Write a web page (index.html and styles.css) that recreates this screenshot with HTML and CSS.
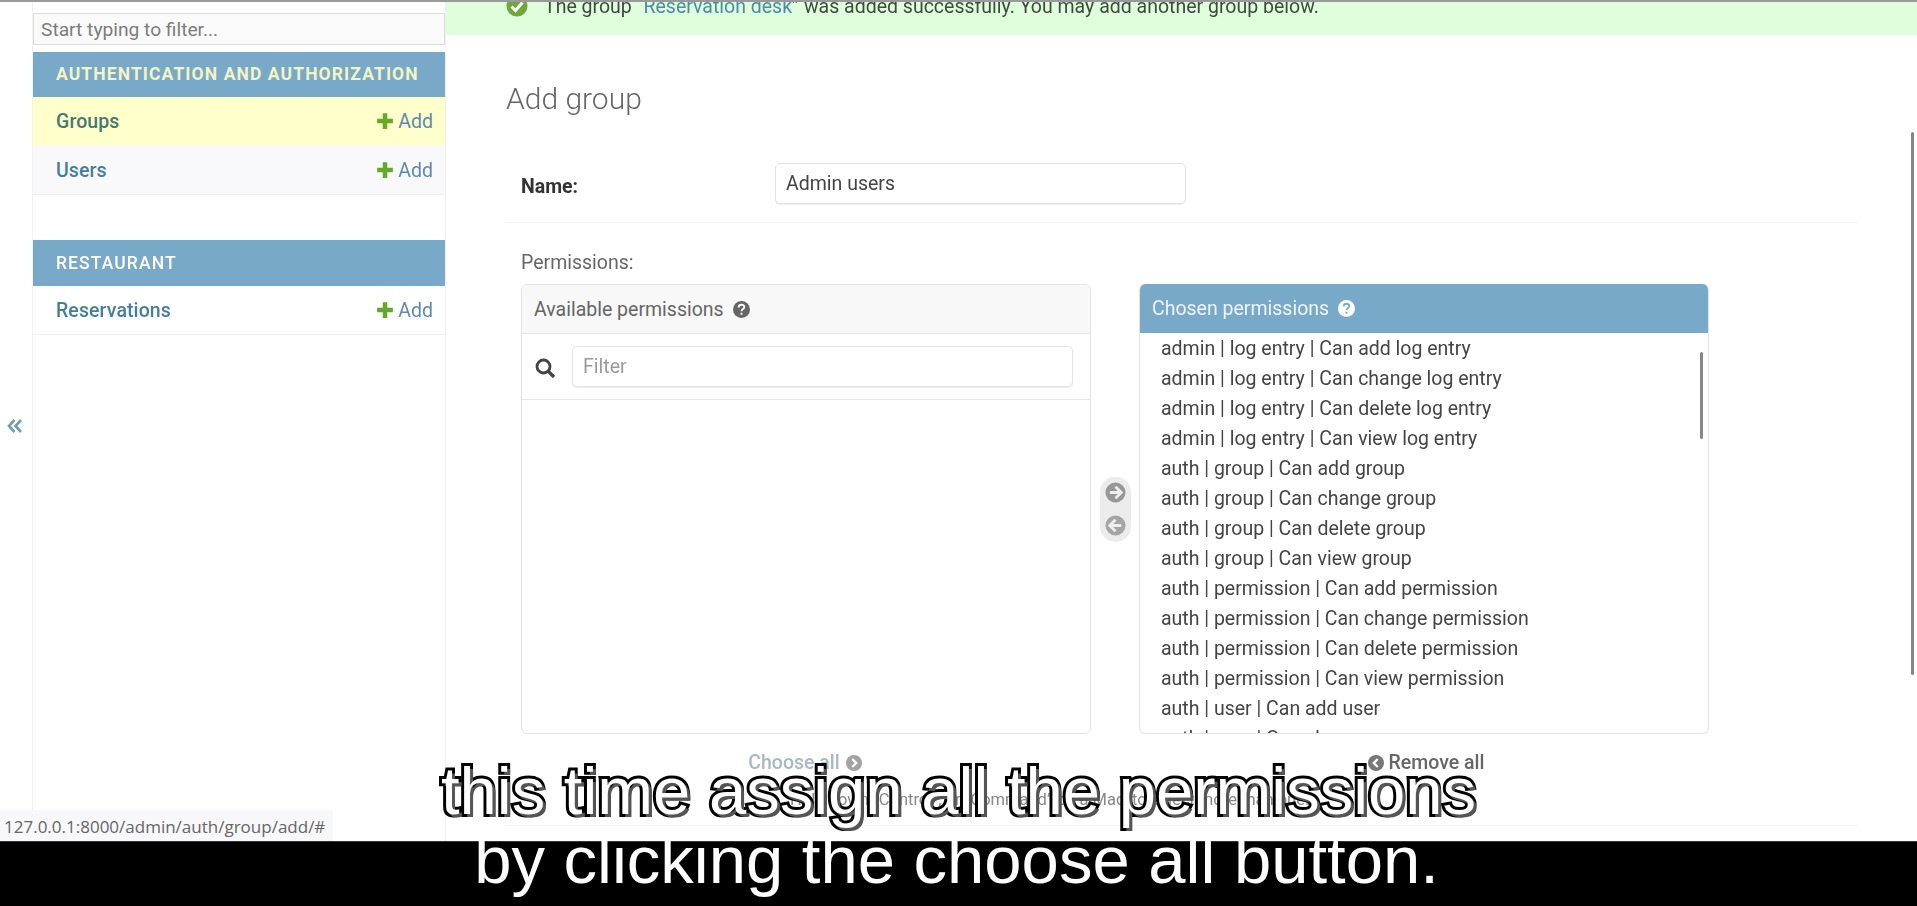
FILE: index.html
```html
<!DOCTYPE html>
<html lang="en">
<head>
<meta charset="utf-8">
<title>Add group</title>
<link rel="stylesheet" href="styles.css">
</head>
<body>
<div class="topline"></div>
<div class="app">
  <div class="toggle">
    <svg class="toggle-icon" viewBox="0 0 16 14" width="16" height="14"><path d="M7.5 1 L2 7 L7.5 13 M14 1 L8.5 7 L14 13" fill="none" stroke="#6f9db8" stroke-width="2.600"/></svg>
  </div>
  <nav class="sidebar">
    <input class="nav-filter" type="text" placeholder="Start typing to filter...">
    <div class="module-head current">AUTHENTICATION AND AUTHORIZATION</div>
    <div class="nav-row selected"><a class="nav-link">Groups</a><a class="nav-add"><svg viewBox="0 0 16 16" width="18" height="18"><path d="M6 1h4v5h5v4h-5v5H6v-5H1V6h5z" fill="#64aa2a"/></svg>Add</a></div>
    <div class="nav-row alt"><a class="nav-link">Users</a><a class="nav-add"><svg viewBox="0 0 16 16" width="18" height="18"><path d="M6 1h4v5h5v4h-5v5H6v-5H1V6h5z" fill="#64aa2a"/></svg>Add</a></div>
    <div class="module-head second">RESTAURANT</div>
    <div class="nav-row"><a class="nav-link">Reservations</a><a class="nav-add"><svg viewBox="0 0 16 16" width="18" height="18"><path d="M6 1h4v5h5v4h-5v5H6v-5H1V6h5z" fill="#64aa2a"/></svg>Add</a></div>
  </nav>
  <main class="main">
    <div class="success">
      <svg class="success-icon" viewBox="0 0 22 22" width="22" height="22"><circle cx="11" cy="11" r="10.500" fill="#70a63a"/><path d="M5.500 11.500l4 4 7-8" fill="none" stroke="#fff" stroke-width="3"/></svg>
      <span>The group “<a class="msg-link">Reservation desk</a>” was added successfully. You may add another group below.</span>
    </div>
    <div class="content">
      <h1 class="title">Add group</h1>
      <div class="name-row">
        <label class="name-label">Name:</label>
        <input class="name-input" type="text" value="Admin users">
      </div>
      <div class="perm-row">
        <div class="perm-label">Permissions:</div>
        <div class="selector">
          <div class="box">
            <div class="box-head">Available permissions
              <svg class="help" viewBox="0 0 18 18" width="17" height="17"><circle cx="9" cy="9" r="9" fill="#666"/><path d="M6 7c0-4 6-4 6-.6 0 2.200-3 2-3 4.400" fill="none" stroke="#fff" stroke-width="2"/><rect x="8" y="12.500" width="2" height="2" fill="#fff"/></svg>
            </div>
            <div class="filter-row">
              <svg class="search" viewBox="0 0 22 22" width="22" height="22"><circle cx="9.500" cy="9.500" r="6.500" fill="none" stroke="#444" stroke-width="2.800"/><path d="M14 14l6 6" stroke="#444" stroke-width="3.200"/></svg>
              <input class="filter-input" type="text" placeholder="Filter">
            </div>
          </div>
          <div class="mover">
            <svg viewBox="0 0 22 22" width="21" height="21"><circle cx="11" cy="11" r="10.500" fill="#979797"/><path d="M11 5l6 6-6 6M5 11h11" fill="none" stroke="#eee" stroke-width="3"/></svg>
            <svg viewBox="0 0 22 22" width="21" height="21"><circle cx="11" cy="11" r="10.500" fill="#a5a5a5"/><path d="M11 5l-6 6 6 6M17 11H6" fill="none" stroke="#eee" stroke-width="3"/></svg>
          </div>
          <div class="box chosen">
            <div class="box-head chosen-head">Chosen permissions
              <svg class="help" viewBox="0 0 18 18" width="17" height="17"><circle cx="9" cy="9" r="9" fill="#fff"/><path d="M6 7c0-4 6-4 6-.6 0 2.200-3 2-3 4.400" fill="none" stroke="#79aec8" stroke-width="2"/><rect x="8" y="12.500" width="2" height="2" fill="#79aec8"/></svg>
            </div>
            <ul class="perm-list">
              <li>admin | log entry | Can add log entry</li>
              <li>admin | log entry | Can change log entry</li>
              <li>admin | log entry | Can delete log entry</li>
              <li>admin | log entry | Can view log entry</li>
              <li>auth | group | Can add group</li>
              <li>auth | group | Can change group</li>
              <li>auth | group | Can delete group</li>
              <li>auth | group | Can view group</li>
              <li>auth | permission | Can add permission</li>
              <li>auth | permission | Can change permission</li>
              <li>auth | permission | Can delete permission</li>
              <li>auth | permission | Can view permission</li>
              <li>auth | user | Can add user</li>
              <li>auth | user | Can change user</li>
            </ul>
            <div class="inner-scroll"></div>
          </div>
          <a class="choose-all">Choose all
            <svg viewBox="0 0 18 18" width="16" height="16"><circle cx="9" cy="9" r="9" fill="#a3a3a3"/><path d="M7 4.500l4.500 4.500L7 13.500" fill="none" stroke="#fff" stroke-width="2.600"/></svg>
          </a>
          <a class="remove-all">
            <svg viewBox="0 0 18 18" width="16" height="16"><circle cx="9" cy="9" r="9" fill="#777"/><path d="M11 4.500L6.500 9l4.500 4.500" fill="none" stroke="#fff" stroke-width="2.600"/></svg>
            Remove all</a>
        </div>
        <p class="help-text">Hold down “Control”, or “Command” on a Mac, to select more than one.</p>
      </div>
    </div>
    <div class="page-scroll"></div>
  </main>
  <div class="status">127.0.0.1:8000/admin/auth/group/add/#</div>
</div>
<div class="letterbox"></div>
<div class="caption">
  <div class="caption-top">this time assign all the permissions</div>
  <div class="caption-bottom">by clicking the choose all button.</div>
</div>
</body>
</html>
```
FILE: styles.css
```css
* { box-sizing: border-box; }
html, body { margin: 0; height: 906px; overflow: hidden; background: #fff; }
body { position: relative; display: flex; flex-direction: column; font-family: Roboto, "Liberation Sans", sans-serif; color: #333; }
a { text-decoration: none; }

.topline { height: 2px; background: #9a9a9a; flex: none; }
.app { position: relative; display: flex; height: 839px; flex: none; overflow: hidden; filter: blur(0.6px); }
.letterbox { flex: 1; background: #000; border-top: 1px solid #333; }

.toggle { width: 33px; flex: none; border-right: 1px solid #f2f2f4; position: relative; display: flex; justify-content: flex-start; padding: 417px 0 0 7px; }
.toggle-icon { display: block; }

.sidebar { width: 413px; flex: none; border-right: 1px solid #f0f0f2; display: flex; flex-direction: column; }
.nav-filter { height: 32px; margin: 11px 0 7px; width: 100%; border: 1px solid #ddd; background: #fbfafb; padding: 0 7px; font: 19.200px Roboto, sans-serif; color: #666; border-radius: 0; outline: 0; }
.nav-filter::placeholder { color: #7c7c7c; opacity: 1; }
.module-head { height: 45px; background: #79a9c8; color: #fff; font-size: 17.500px; font-weight: 500; letter-spacing: 1.1px; padding: 0 0 2px 23px; display: flex; align-items: center; }
.module-head.current { color: #f3f3c4; font-weight: 700; }
.module-head.second { margin-top: 45px; height: 46px; padding-bottom: 1px; }
.nav-row { height: 49px; display: flex; align-items: center; justify-content: space-between; padding: 0 12px 0 23px; border-bottom: 1px solid #f0f0f0; font-size: 19.500px; background: #fff; }
.nav-row.selected { background: #ffffcc; border-bottom-color: #fbfbe4; }
.nav-row.alt { background: #f9f8fb; }
.nav-link { color: #447e9b; font-weight: 500; letter-spacing: 0.1px; }
.selected .nav-link { color: #44796f; }
.nav-add { color: #5a8bb0; display: flex; align-items: center; gap: 4px; }

.main { flex: 1; position: relative; min-width: 0; }
.success { height: 33px; background: #dfffdc; overflow: hidden; display: flex; align-items: flex-start; padding-left: 60px; font-size: 19.500px; color: #404a40; }
.success-icon { margin: -7px 16px 0 0; flex: none; }
.success span { margin-top: -7px; line-height: 24px; white-space: nowrap; }
.msg-link { color: #4a8ba6; }

.content { padding: 0 60px 0 60px; }
.title { margin: 46px 0 0; font-size: 30px; line-height: 36px; font-weight: 300; color: #666; }
.name-row { display: flex; align-items: flex-start; margin-top: 46px; padding: 0 0 18px 15px; border-bottom: 1px solid #f2f2f2; }
.name-label { width: 254px; flex: none; font-size: 19.500px; font-weight: 700; color: #333; padding-top: 12px; line-height: 24px; }
.name-input { width: 411px; height: 41px; border: 1px solid #e3e3e3; border-radius: 5px; padding: 0 10px; font: 19.500px Roboto, sans-serif; color: #444; outline: 0; box-shadow: 0 1px 1px #eee; }

.perm-row { padding: 28px 0 0 15px; border-bottom: 1px solid #f2f2f2; height: 603px; }
.perm-label { font-size: 19.500px; line-height: 23px; color: #666; margin-bottom: 10px; }
.selector { display: grid; grid-template-columns: 570px 48px 570px; grid-template-rows: 450px auto; justify-items: stretch; }
.box { border: 1px solid #e4e4e6; border-radius: 6px; position: relative; overflow: hidden; }
.box-head { height: 49px; background: #f8f8f8; border-bottom: 1px solid #e6e6e6; display: flex; align-items: center; gap: 9px; padding-left: 12px; font-size: 19.500px; color: #666; }
.box.chosen { border-top: 0; }
.chosen-head { background: #79a9c8; color: #eef5fa; border-bottom: 0; height: 49px; padding-left: 12px; }
.filter-row { height: 66px; display: flex; align-items: center; padding: 0 17px 0 12px; gap: 16px; border-bottom: 1px solid #e6e6e6; }
.search { flex: none; margin-top: 3px; }
.filter-input { flex: 1; min-width: 0; height: 41px; border: 1px solid #e4e4e4; border-radius: 5px; padding: 0 10px; font: 19.500px Roboto, sans-serif; outline: 0; box-shadow: 0 1px 1px #eee; }
.filter-input::placeholder { color: #9b9b9b; opacity: 1; }
.mover { align-self: center; justify-self: center; width: 31px; height: 65px; border-radius: 15px; background: #ececec; display: flex; flex-direction: column; align-items: center; justify-content: center; gap: 12px; }
.perm-list { list-style: none; margin: 0; padding: 1px 0 0 21px; font-size: 19.500px; line-height: 30px; color: #444; height: 400px; overflow: hidden; }
.inner-scroll { position: absolute; top: 68px; right: 5px; width: 3px; height: 87px; background: #8a8688; border-radius: 2px; }
.choose-all, .remove-all { display: flex; align-items: center; justify-content: center; gap: 6px; font-size: 19.500px; line-height: 24px; margin-top: 17px; font-weight: 500; }
.choose-all { grid-column: 1; color: #a8b8c8; padding-right: 2px; }
.remove-all { grid-column: 3; color: #666; gap: 5px; padding-left: 4px; }
.help-text { margin: 13px 0 0 269px; font-size: 16.500px; line-height: 24px; color: #888; white-space: nowrap; }

.page-scroll { position: absolute; right: 3px; top: 130px; width: 3px; height: 543px; background: #8a8688; border-radius: 2px; }
.status { position: absolute; left: 0; bottom: 0; width: 333px; height: 31px; background: #f8f7fa; color: #666; font: 17px "Open Sans", sans-serif; line-height: 33px; padding-left: 4px; white-space: nowrap; }

.caption { position: absolute; left: 0; right: 0; top: 756px; text-align: center; font-family: "Liberation Sans", Arial, sans-serif; font-size: 67px; line-height: 69px; white-space: nowrap; color: #fff; }
.caption-top { -webkit-text-stroke: 6px #000; paint-order: stroke fill; text-shadow: 3px 3px 0 #555; }
.caption-bottom { color: #fff; padding-right: 4px; }
```
